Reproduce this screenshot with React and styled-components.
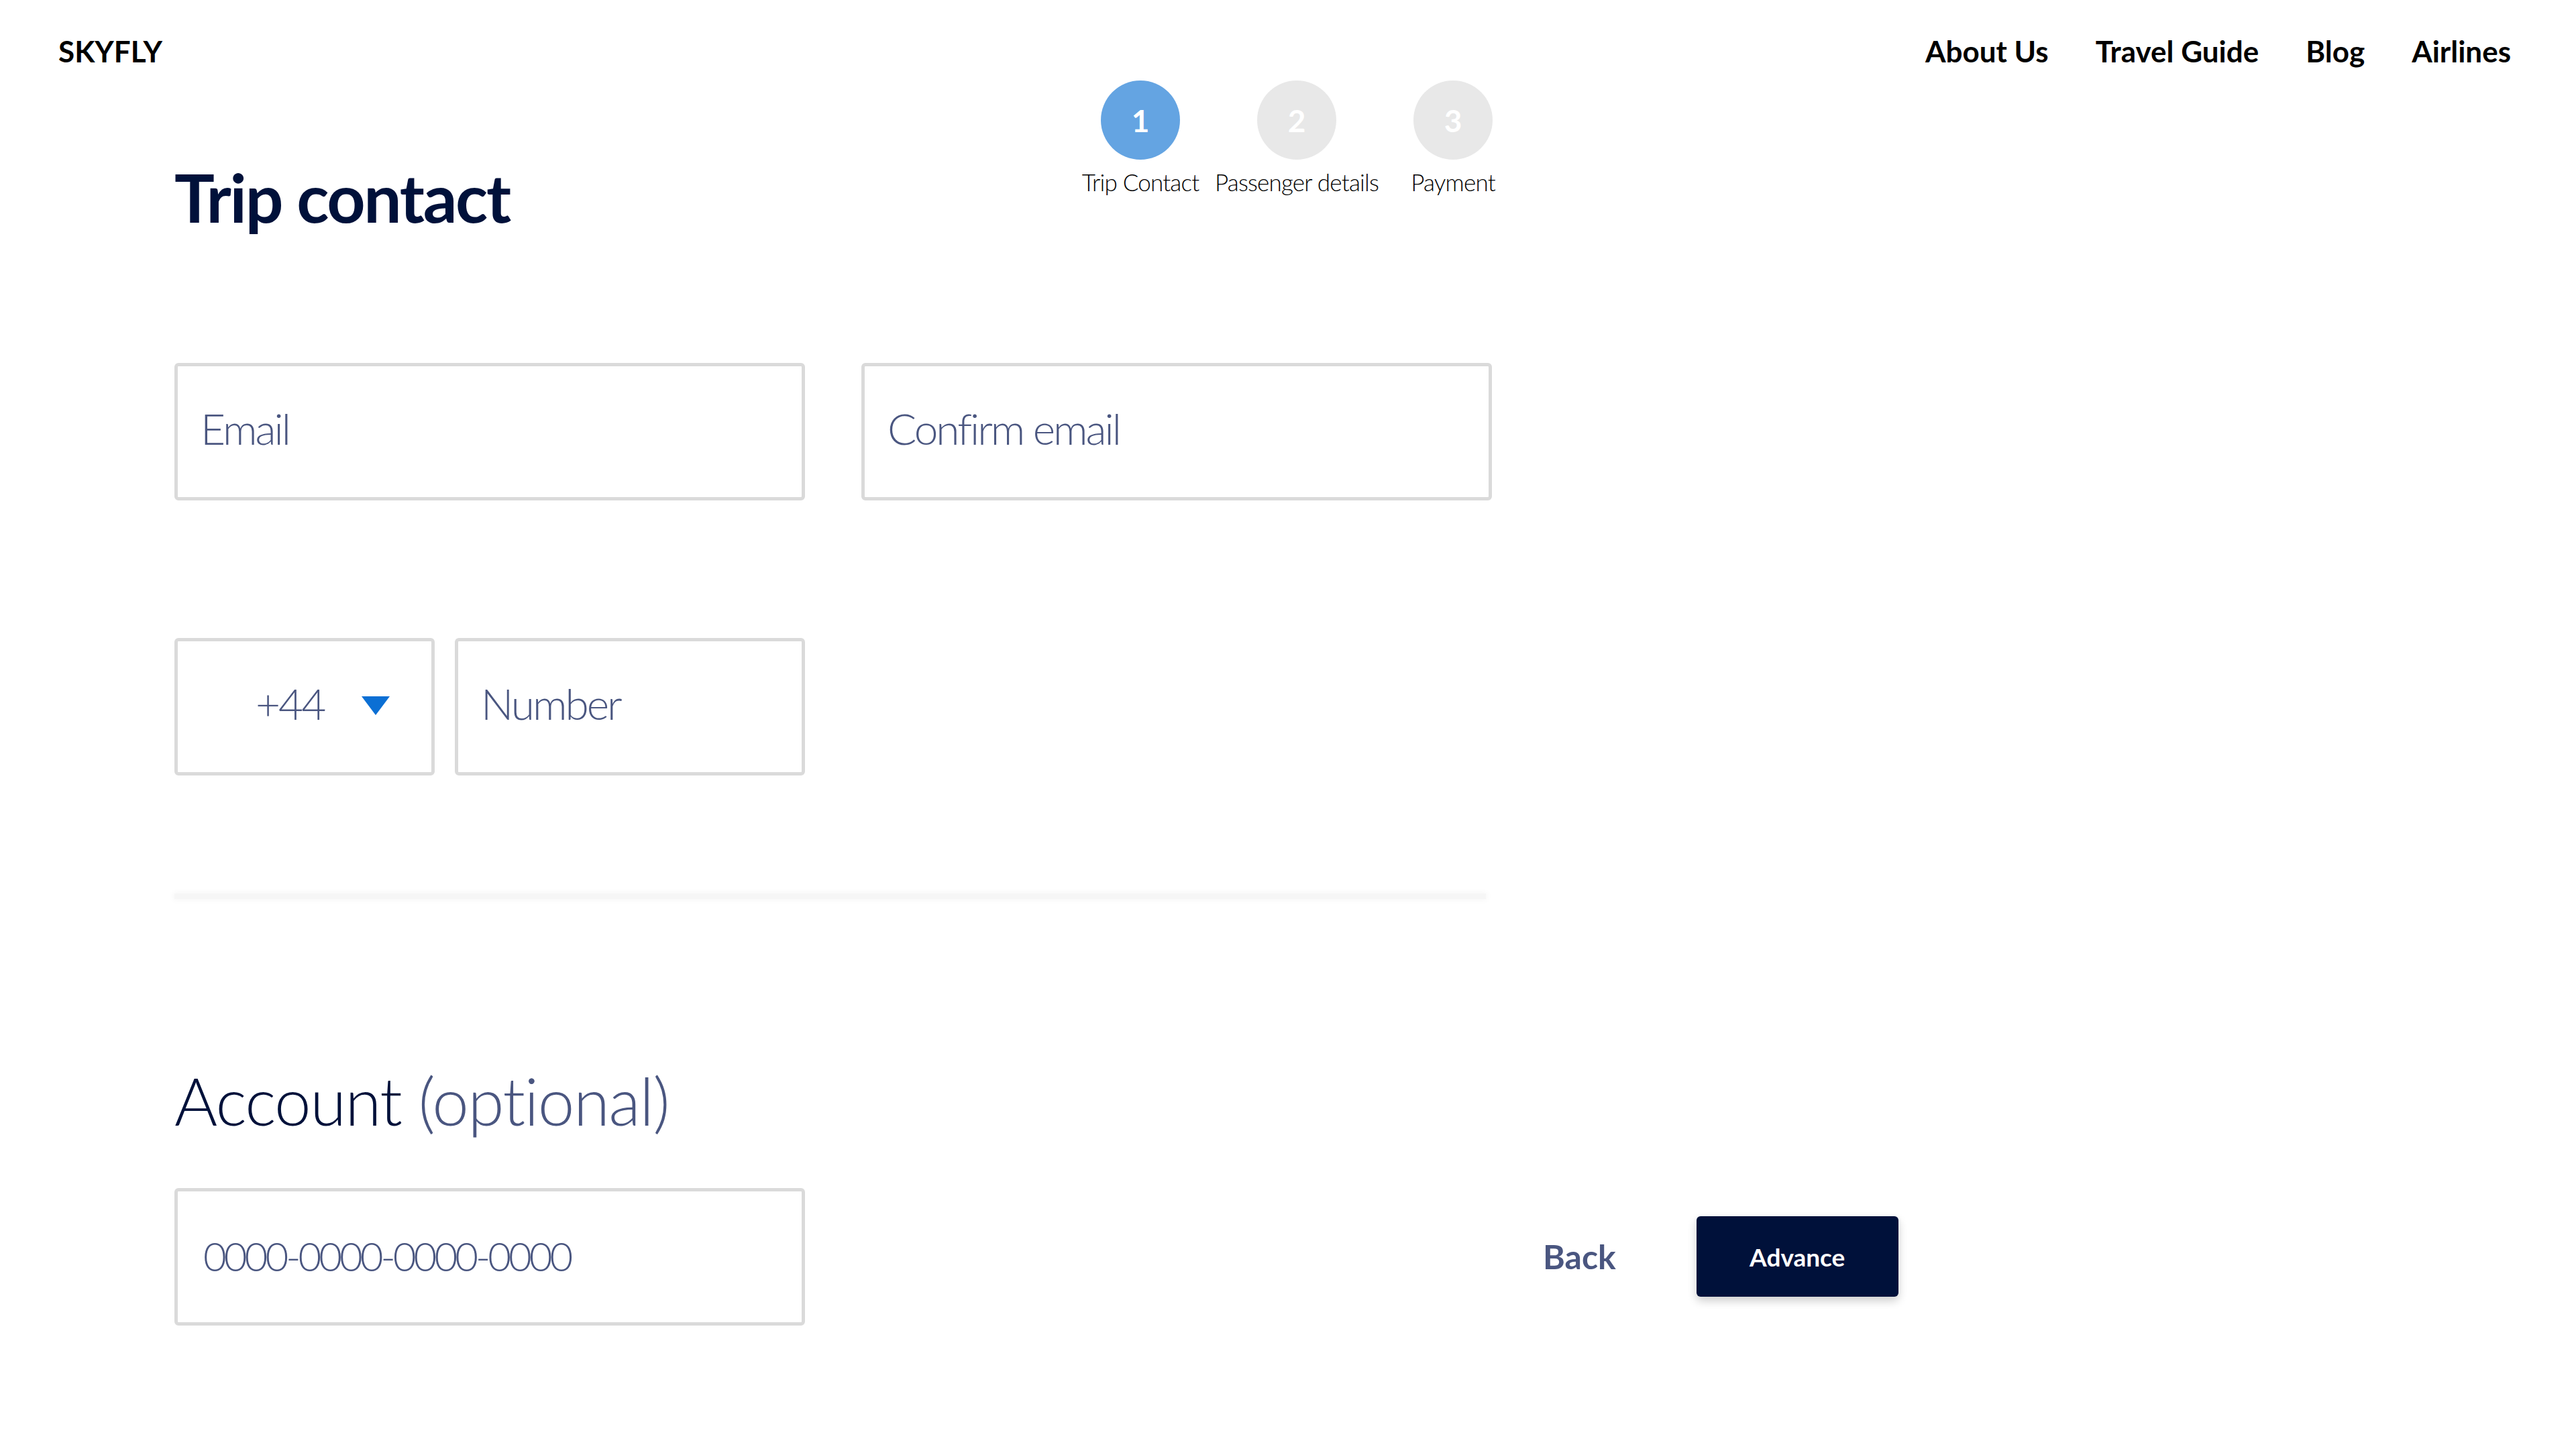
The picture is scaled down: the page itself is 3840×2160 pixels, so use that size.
import React from "react";
import styled, { createGlobalStyle } from "styled-components";

const GlobalStyle = createGlobalStyle`
  html, body {
    margin: 0;
    padding: 0;
    background: #ffffff;
  }
  body {
    font-family: Lato, "Noto Sans", sans-serif;
    -webkit-font-smoothing: antialiased;
  }
`;

const Page = styled.div`
  width: 3840px;
  min-height: 2160px;
  background: #ffffff;
`;

const Header = styled.header`
  box-sizing: border-box;
  height: 120px;
  padding: 50px 97px 0 87px;
  display: flex;
  justify-content: space-between;
  align-items: flex-start;
`;

const Logo = styled.div`
  font-size: 44px;
  line-height: 52px;
  font-weight: 700;
  color: #000000;
`;

const Nav = styled.nav`
  display: flex;
  gap: 70px;
`;

const NavLink = styled.a`
  font-size: 44px;
  line-height: 52px;
  font-weight: 700;
  color: #000000;
  text-decoration: none;
`;

const Main = styled.main`
  width: 1970px;
  padding-left: 260px;
`;

const TitleRow = styled.div`
  display: flex;
  justify-content: space-between;
  align-items: flex-start;
`;

const Heading = styled.h1`
  margin: 113px 0 0;
  font-size: 100px;
  line-height: 1.2;
  font-weight: 700;
  letter-spacing: -2.3px;
  color: #00113a;
`;

const Stepper = styled.ol`
  display: flex;
  gap: 105px;
  margin: 0;
  padding: 0;
  list-style: none;
`;

const Step = styled.li`
  width: 128px;
  display: flex;
  flex-direction: column;
  align-items: center;
`;

const StepCircle = styled.div`
  width: 118px;
  height: 118px;
  border-radius: 50%;
  background: ${(p) => (p.$active ? "#64a4e2" : "#e8e8e8")};
  color: #ffffff;
  font-size: 46px;
  font-weight: 700;
  display: flex;
  align-items: center;
  justify-content: center;
`;

const StepLabel = styled.span`
  margin-top: 12px;
  font-size: 35px;
  line-height: 1.2;
  font-weight: 300;
  color: #000000;
  white-space: nowrap;
  letter-spacing: -0.8px;
`;

const FieldRow = styled.div`
  display: flex;
  gap: ${(p) => p.$gap || 84}px;
  margin-top: ${(p) => p.$top}px;
`;

const Field = styled.div`
  box-sizing: border-box;
  flex-shrink: 0;
  width: ${(p) => p.$width}px;
  height: 205px;
  border: 5px solid #dadada;
  border-radius: 6px;
  padding: 0 0 ${(p) => p.$lift ?? 10}px ${(p) => p.$pad || 34}px;
  display: flex;
  align-items: center;
  gap: 56px;
  font-size: ${(p) => p.$size || 64}px;
  font-weight: 300;
  letter-spacing: ${(p) => p.$spacing ?? -3}px;
  color: #4a5680;
  white-space: nowrap;
`;

const Caret = styled.svg`
  width: 42px;
  height: 28px;
  flex-shrink: 0;
  margin-top: 6px;
`;

const Divider = styled.div`
  width: 1955px;
  height: 8px;
  margin-top: 176px;
  background: #f6f6f6;
  box-shadow: 0 0 8px 2px rgba(0, 0, 0, 0.035);
`;

const SubHeading = styled.h2`
  margin: 242px 0 0;
  font-size: 98px;
  line-height: 1.2;
  font-weight: 300;
  letter-spacing: -1.5px;
  color: #00113a;
`;

const Optional = styled.span`
  color: #4a5680;
`;

const BottomRow = styled.div`
  display: flex;
  align-items: center;
  margin-top: 71px;
`;

const Actions = styled.div`
  display: flex;
  align-items: center;
  gap: 120px;
  margin-left: 1100px;
`;

const BackButton = styled.button`
  border: none;
  background: none;
  padding: 0;
  font-family: inherit;
  font-size: 50px;
  font-weight: 700;
  color: #4a5680;
  cursor: pointer;
`;

const AdvanceButton = styled.button`
  width: 301px;
  height: 120px;
  border: none;
  border-radius: 6px;
  background: #00113a;
  color: #ffffff;
  font-family: inherit;
  font-size: 37px;
  font-weight: 700;
  box-shadow: 0 6px 14px rgba(0, 0, 0, 0.2);
  cursor: pointer;
`;

const steps = ["Trip Contact", "Passenger details", "Payment"];

const App = () => {
  return (
    <Page>
      <GlobalStyle />
      <Header>
        <Logo>SKYFLY</Logo>
        <Nav>
          <NavLink>About Us</NavLink>
          <NavLink>Travel Guide</NavLink>
          <NavLink>Blog</NavLink>
          <NavLink>Airlines</NavLink>
        </Nav>
      </Header>

      <Main>
        <TitleRow>
          <Heading>Trip contact</Heading>
          <Stepper>
            {steps.map((label, i) => (
              <Step key={label}>
                <StepCircle $active={i === 0}>{i + 1}</StepCircle>
                <StepLabel>{label}</StepLabel>
              </Step>
            ))}
          </Stepper>
        </TitleRow>

        <FieldRow $top={188}>
          <Field $width={940}>Email</Field>
          <Field $width={940}>Confirm email</Field>
        </FieldRow>

        <FieldRow $top={205} $gap={30}>
          <Field $width={388} $pad={116}>
            +44
            <Caret viewBox="0 0 42 28">
              <polygon points="0,0 42,0 21,28" fill="#0b6fd4" />
            </Caret>
          </Field>
          <Field $width={522}>Number</Field>
        </FieldRow>

        <Divider />

        <SubHeading>
          Account <Optional>(optional)</Optional>
        </SubHeading>

        <BottomRow>
          <Field $width={940} $pad={38} $size={60} $spacing={-4} $lift={2}>
            0000-0000-0000-0000
          </Field>
          <Actions>
            <BackButton>Back</BackButton>
            <AdvanceButton>Advance</AdvanceButton>
          </Actions>
        </BottomRow>
      </Main>
    </Page>
  );
};

export default App;
